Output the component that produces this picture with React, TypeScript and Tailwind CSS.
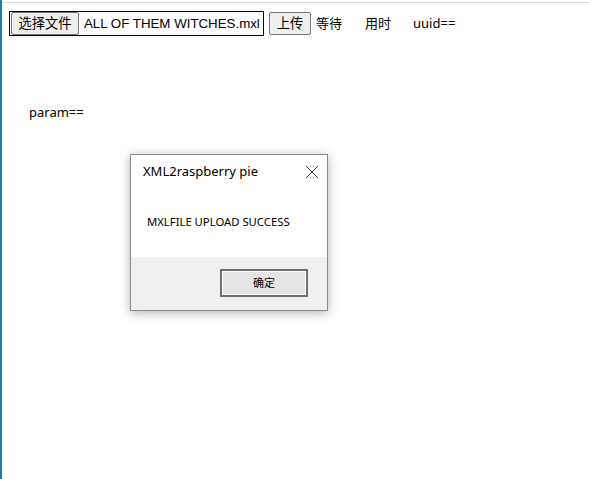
import { X } from 'lucide-react';

const ui = { fontFamily: '"Microsoft YaHei", "Noto Sans", "Noto Sans CJK SC", sans-serif' };
const arial = { fontFamily: '"Liberation Sans", "Noto Sans CJK SC", sans-serif' };

const App = () => {
  return (
    <div className="relative h-[479px] w-[589px] overflow-hidden border-l-2 border-[#1f7ea6] bg-white text-black" style={ui}>
      <div className="mt-[2px] border-t border-[#dedede]">
        {/* top bar */}
        <div className="flex items-center pl-[7px] pt-[8px] text-[13px]">
          <div className="flex h-[25px] w-[255px] items-center border border-black pl-px" style={arial}>
            <button className="h-[23px] w-[68px] rounded-[2px] border border-[#767676] bg-[#efefef] text-[13.3px] leading-none">
              选择文件
            </button>
            <span className="ml-[5px] text-[13.3px]">ALL OF THEM WITCHES.mxl</span>
          </div>
          <button
            className="ml-[5px] h-[23px] w-[42px] rounded-[2px] border border-[#767676] bg-[#efefef] text-[13.3px] leading-none"
            style={arial}
          >
            上传
          </button>
          <span className="ml-[5px]">等待</span>
          <span className="ml-[23px]">用时</span>
          <span className="ml-[22px]">uuid==</span>
        </div>

        {/* params */}
        <div className="mt-[67px] pl-[27px] text-[13px]">param==</div>
      </div>

      {/* alert dialog */}
      <div className="absolute left-[128px] top-[154px] flex h-[157px] w-[198px] flex-col border border-[#8a8a8a] bg-white shadow-[0_2px_10px_rgba(0,0,0,0.3)]">
        <div className="flex h-[33px] items-center justify-between pl-[12px] pr-[3px] text-[13px]">
          <span>XML2raspberry pie</span>
          <X size={24} strokeWidth={0.75} />
        </div>
        <div className="flex-1 pl-[16px] pt-[26px] text-[11.3px]">MXLFILE UPLOAD SUCCESS</div>
        <div className="flex h-[53px] justify-end bg-[#f0f0f0] pr-[19px] pt-[12px]">
          <button className="h-[28px] w-[88px] border-2 border-[#6f6f6f] bg-[#e5e5e5] text-[11px] shadow-[inset_0_0_0_1px_#ffffff]">
            确定
          </button>
        </div>
      </div>
    </div>
  );
};

export default App;
